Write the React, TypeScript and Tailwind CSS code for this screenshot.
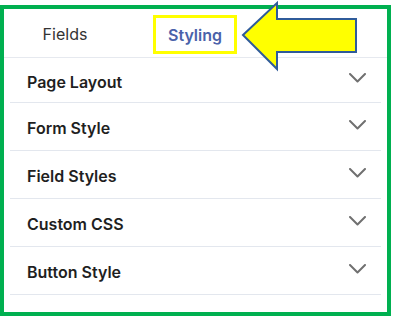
const sections = ["Page Layout", "Form Style", "Field Styles", "Custom CSS", "Button Style"];

function Chevron() {
    return (
        <svg width="17" height="10" viewBox="0 0 17 10" fill="none" className="shrink-0 mb-[4px]">
            <polyline points="1,1 8.5,8.5 16,1" stroke="#707070" strokeWidth="2" strokeLinecap="round" strokeLinejoin="round" />
        </svg>
    );
}

export default function App() {
    return (
        <div className="relative w-[393px] h-[316px] bg-white pt-[5px] font-['Inter',sans-serif]">
            <div className="w-[391px] h-[311px] border-4 border-[#00b050] bg-white">
                {/* tabs */}
                <div className="flex items-start h-[49px] border-b border-[#e6e9ef] pl-[19px] pt-[6px] gap-[46px]">
                    <div className="w-[84px] h-[39px] flex items-center justify-center pb-[1px] text-[16px] text-[#333333]">
                        Fields
                    </div>
                    <div className="w-[84px] h-[39px] flex items-center justify-center border-[3px] border-[#ffff00] text-[16px] font-semibold text-[#4a62aa]">
                        Styling
                    </div>
                </div>

                {/* accordion */}
                <ul className="px-[6px] m-0 list-none">
                    {sections.map((label, i) => (
                        <li
                            key={label}
                            className={`flex items-center justify-between border-b border-[#e3e7ee] pl-[17px] pr-[15px] ${
                                i === 0 ? "h-[45px]" : "h-[48px]"
                            }`}
                        >
                            <span className="pt-[3px] text-[16px] font-semibold text-[#1f1f1f]">{label}</span>
                            <Chevron />
                        </li>
                    ))}
                </ul>
            </div>

            {/* callout arrow */}
            <svg className="absolute left-0 top-0 pointer-events-none" width="393" height="80" viewBox="0 0 393 80">
                <polygon
                    points="243,35 277,3 277,19 356,19 356,52 277,52 277,69"
                    fill="#ffff00"
                    stroke="#2f5b9a"
                    strokeWidth="2"
                    strokeLinejoin="miter"
                />
            </svg>
        </div>
    );
}
